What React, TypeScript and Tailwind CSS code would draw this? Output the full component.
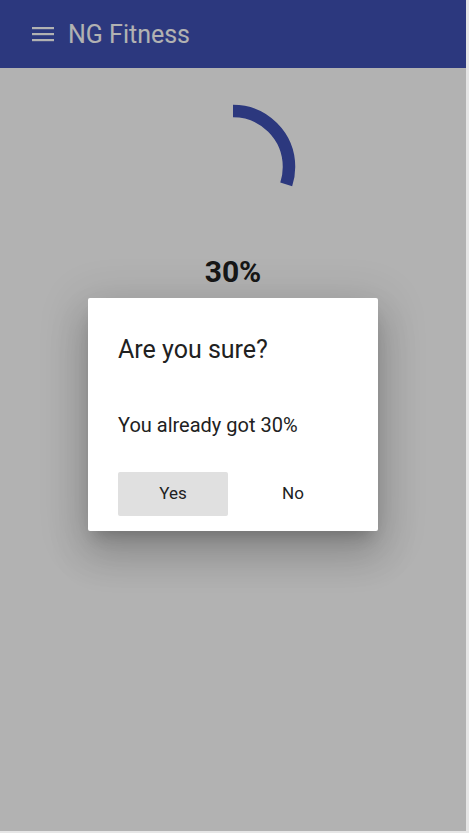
import React from "react";

export default function App() {
  const r = 56;
  const c = 2 * Math.PI * r;
  return (
    <div className="w-[469px] h-[833px] bg-[#e6e6e6] overflow-hidden" style={{ fontFamily: "Roboto, 'Noto Sans', sans-serif" }}>
      <div className="relative w-[466px] h-[831px] bg-white overflow-hidden">
        <div className="h-[68px] bg-[#3f51b5] flex items-center pl-[32px] gap-[14px]">
          <svg width="22" height="16" viewBox="0 0 22 16">
            <rect x="0" y="1" width="22" height="2.2" fill="#ffffff" />
            <rect x="0" y="7" width="22" height="2.2" fill="#ffffff" />
            <rect x="0" y="13" width="22" height="2.2" fill="#ffffff" />
          </svg>
          <span className="text-white text-[25px] leading-none">NG Fitness</span>
        </div>
        <div className="flex flex-col items-center">
          <svg width="140" height="140" viewBox="0 0 140 140" className="mt-[29px] -rotate-90">
            <circle cx="70" cy="70" r={r} fill="none" stroke="#3f51b5" strokeWidth="12.5" strokeDasharray={`${c * 0.3} ${c}`} />
          </svg>
          <div className="mt-[17px] text-[30px] font-bold text-[#212121] leading-[36px]">30%</div>
        </div>
        <div className="absolute inset-0 bg-black/30 flex items-start justify-center">
          <div className="mt-[298px] w-[290px] h-[233px] bg-white rounded-[2px] shadow-[0_11px_15px_-7px_rgba(0,0,0,0.2),0_24px_38px_3px_rgba(0,0,0,0.14),0_9px_46px_8px_rgba(0,0,0,0.12)] px-[30px] pt-[36px] flex flex-col">
            <div className="text-[25px] text-[#212121] leading-[32px]">Are you sure?</div>
            <div className="mt-[46px] text-[20px] text-[#212121] leading-[26px]">You already got 30%</div>
            <div className="mt-[34px] flex gap-[10px]">
              <button className="w-[110px] h-[44px] bg-[#e0e0e0] rounded-[2px] text-[17px] text-[#212121]">Yes</button>
              <button className="w-[110px] h-[44px] rounded-[2px] text-[17px] text-[#212121]">No</button>
            </div>
          </div>
        </div>
      </div>
    </div>
  );
}
